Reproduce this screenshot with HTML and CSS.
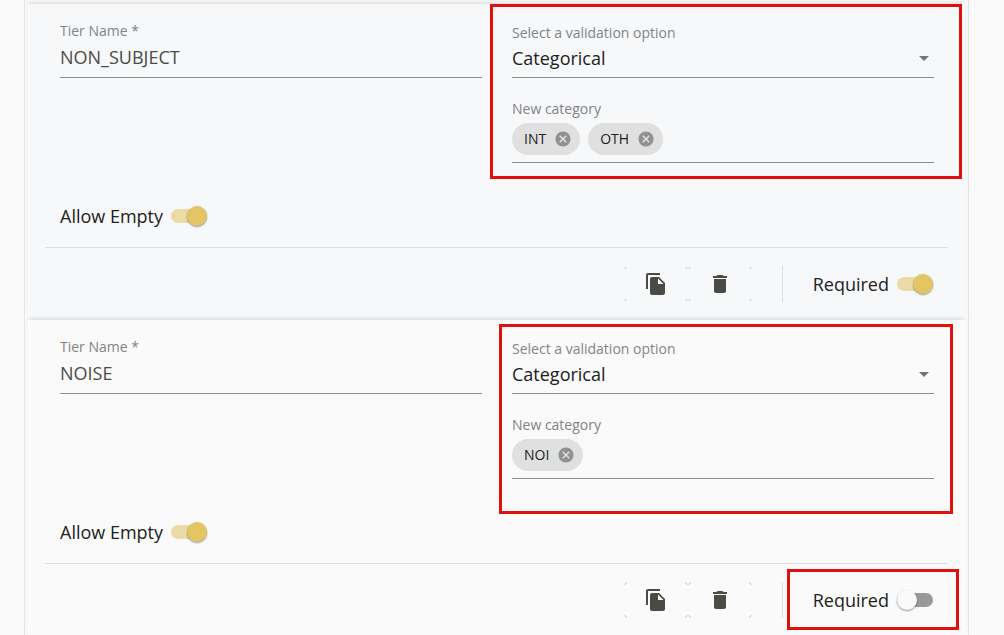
FILE: index.html
```html
<!DOCTYPE html>
<html lang="en">
<head>
<meta charset="utf-8">
<title>Tiers</title>
<link rel="stylesheet" href="styles.css">
</head>
<body>
<svg class="sprite" aria-hidden="true">
  <symbol id="copy" viewBox="0 0 24 24"><path d="M16 1H4c-1.100 0-2 .9-2 2v14h2V3h12V1zm-1 4 6 6v10c0 1.100-.9 2-2 2H7.990C6.890 23 6 22.100 6 21l.010-14c0-1.100.890-2 1.990-2h7zm-1 7h5.500L14 6.500V12z"/></symbol>
  <symbol id="trash" viewBox="0 0 24 24"><path d="M6 19c0 1.100.9 2 2 2h8c1.100 0 2-.9 2-2V7H6v12zM19 4h-3.500l-1-1h-5l-1 1H5v2h14V4z"/></symbol>
  <symbol id="cancel" viewBox="0 0 24 24"><path d="M12 2C6.470 2 2 6.470 2 12s4.470 10 10 10 10-4.470 10-10S17.530 2 12 2zm5 13.590L15.590 17 12 13.410 8.410 17 7 15.590 10.590 12 7 8.410 8.410 7 12 10.590 15.590 7 17 8.410 13.410 12 17 15.590z"/></symbol>
</svg>
<main class="panel">
  <section class="card card-active">
    <div class="fields">
      <div class="field name-field">
        <label class="label" for="name-1">Tier Name *</label>
        <input class="control name" id="name-1" type="text" value="NON_SUBJECT">
      </div>
      <div class="validation">
        <div class="field select-field">
          <label class="label" for="option-1">Select a validation option</label>
          <select class="control" id="option-1"><option>Categorical</option></select>
        </div>
        <div class="field">
          <label class="label" for="category-1">New category</label>
          <div class="chips">
            <span class="chip">INT<button class="remove" type="button" aria-label="Remove INT"><svg><use href="#cancel"/></svg></button></span>
            <span class="chip">OTH<button class="remove" type="button" aria-label="Remove OTH"><svg><use href="#cancel"/></svg></button></span>
            <input class="chip-input" id="category-1" type="text">
          </div>
        </div>
        <span class="highlight highlight-wide"></span>
      </div>
    </div>
    <label class="toggle allow">Allow Empty<input class="switch" type="checkbox" checked></label>
    <footer class="actions">
      <div class="buttons">
        <button class="action" type="button" aria-label="Duplicate tier"><svg><use href="#copy"/></svg></button>
        <button class="action" type="button" aria-label="Delete tier"><svg><use href="#trash"/></svg></button>
      </div>
      <div class="required"><label class="toggle">Required<input class="switch" type="checkbox" checked></label></div>
    </footer>
  </section>
  <section class="card">
    <div class="fields">
      <div class="field name-field">
        <label class="label" for="name-2">Tier Name *</label>
        <input class="control name" id="name-2" type="text" value="NOISE">
      </div>
      <div class="validation">
        <div class="field select-field">
          <label class="label" for="option-2">Select a validation option</label>
          <select class="control" id="option-2"><option>Categorical</option></select>
        </div>
        <div class="field">
          <label class="label" for="category-2">New category</label>
          <div class="chips">
            <span class="chip">NOI<button class="remove" type="button" aria-label="Remove NOI"><svg><use href="#cancel"/></svg></button></span>
            <input class="chip-input" id="category-2" type="text">
          </div>
        </div>
        <span class="highlight highlight-tall"></span>
      </div>
    </div>
    <label class="toggle allow">Allow Empty<input class="switch" type="checkbox" checked></label>
    <footer class="actions">
      <div class="buttons">
        <button class="action" type="button" aria-label="Duplicate tier"><svg><use href="#copy"/></svg></button>
        <button class="action" type="button" aria-label="Delete tier"><svg><use href="#trash"/></svg></button>
      </div>
      <div class="required"><label class="toggle">Required<input class="switch" type="checkbox"></label><span class="highlight highlight-small"></span></div>
    </footer>
  </section>
</main>
</body>
</html>
```
FILE: styles.css
```css
* { box-sizing: border-box; }
html, body { height: 100%; }
body {
  margin: 0;
  overflow: hidden;
  background: #fafafa;
  color: #212121;
  font: 18px/24px "Open Sans", "Noto Sans", sans-serif;
}
input, select, button { font: inherit; color: inherit; }
svg { display: block; fill: currentColor; }
.sprite { position: absolute; width: 0; height: 0; }

.panel {
  min-height: 100%;
  margin: 0 35px 0 24px;
  padding: 4px 2px 0;
  border: solid #e4e5e7;
  border-width: 0 1px;
}
.card {
  position: relative;
  padding: 17px 18px 18px;
  background: #fafafa;
  box-shadow: 0 -3px 5px -2px rgba(0, 0, 0, .14);
}
.card-active { background: #f7f8fa; }

.fields {
  display: grid;
  grid-template-columns: 1fr 1fr;
  gap: 30px;
  padding: 0 14px 0 15px;
}
.validation { position: relative; padding-top: 2px; }
.field { display: flex; flex-direction: column; }
.select-field { position: relative; margin-bottom: 21px; }
.label { color: #828385; font-size: 14px; line-height: 20px; }
.control {
  width: 100%;
  height: 35px;
  margin: 0;
  padding: 0 0 5px;
  border: 0;
  border-bottom: 1px solid #8c8d8f;
  border-radius: 0;
  background: none;
  outline: 0;
  appearance: none;
}
.name { height: 37px; padding-bottom: 4px; color: #4a4b45; }
.select-field::after {
  content: "";
  position: absolute;
  right: 5px;
  bottom: 17px;
  border: 5px solid transparent;
  border-top-color: #757575;
  border-bottom: 0;
  pointer-events: none;
}
.chips {
  display: flex;
  gap: 8px;
  padding: 4px 0 7px;
  border-bottom: 1px solid #8c8d8f;
}
.chip {
  display: flex;
  align-items: center;
  gap: 8px;
  height: 32px;
  padding: 0 8px 0 12px;
  border-radius: 16px;
  background: #e0e0e0;
  font-size: 14px;
}
.remove, .action { border: 0; background: none; cursor: pointer; }
.remove { padding: 0; color: #919191; }
.remove svg { width: 18px; height: 18px; }
.chip-input { flex: 1; min-width: 0; padding: 0; border: 0; background: none; outline: 0; }

.toggle { display: flex; align-items: center; gap: 8px; width: max-content; }
.allow { margin: 41px 15px 19px; }
.switch {
  position: relative;
  width: 36px;
  height: 14px;
  margin: 0;
  border-radius: 7px;
  background: #999;
  appearance: none;
}
.switch::before {
  content: "";
  position: absolute;
  top: -3px;
  left: 0;
  width: 20px;
  height: 20px;
  border-radius: 50%;
  background: #fafafa;
  box-shadow: 0 1px 2px rgba(0, 0, 0, .4);
}
.switch:checked { background: #ebdca7; }
.switch:checked::before { left: 16px; background: #e3c663; }

.actions {
  display: flex;
  justify-content: flex-end;
  align-items: center;
  gap: 30px;
  padding: 18px 15px 0;
  border-top: 1px solid #dedfe1;
}
.buttons { display: flex; }
.action {
  position: relative;
  display: grid;
  place-items: center;
  width: 64px;
  height: 36px;
  padding: 0;
  border-radius: 4px;
  color: #4a4b45;
}
.action::before {
  content: "";
  position: absolute;
  inset: 0;
  border: 1px solid #c8c9cb;
  border-radius: 4px;
  mask: linear-gradient(#000 0 0) 0 0 / 3px 3px no-repeat, linear-gradient(#000 0 0) 100% 0 / 3px 3px no-repeat, linear-gradient(#000 0 0) 0 100% / 3px 3px no-repeat, linear-gradient(#000 0 0) 100% 100% / 3px 3px no-repeat;
}
.action svg { width: 24px; height: 24px; }
.required {
  position: relative;
  display: flex;
  align-items: center;
  height: 36px;
  padding-left: 30px;
  border-left: 1px solid #dcdddf;
}

.highlight {
  position: absolute;
  z-index: 2;
  border: 3px solid #e20f0f;
  pointer-events: none;
}
.highlight-wide { inset: -17px -28px -16px -22px; }
.highlight-tall { inset: -13px -19px -35px -13px; }
.highlight-small { inset: -13px -26px -12px 4px; }
```
